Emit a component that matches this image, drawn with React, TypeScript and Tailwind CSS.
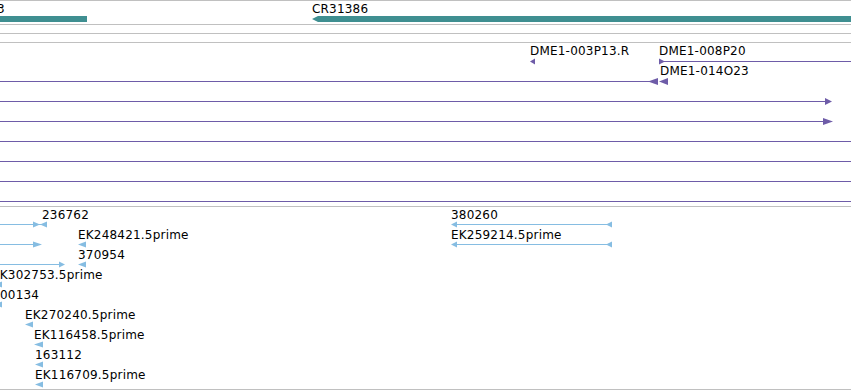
import React from 'react';

type Shape =
  | { kind: 'line'; x1: number; x2: number; y: number }
  | { kind: 'left'; x: number; y: number; w: number; h: number }
  | { kind: 'right'; x: number; y: number; w: number; h: number }
  | { kind: 'bar'; x1: number; x2: number; y: number; h: number; point?: boolean };

interface Label {
  text: string;
  x: number;
  y: number;
}

interface Track {
  top: number;
  height: number;
  color: string;
  shapes: Shape[];
  labels: Label[];
}

const TEAL = '#3f8f91';
const PURPLE = '#6e5ca8';
const BLUE = '#86bde2';

const tracks: Track[] = [
  {
    top: 0,
    height: 24,
    color: TEAL,
    labels: [
      { text: '3', x: -3, y: 2 },
      { text: 'CR31386', x: 312, y: 2 },
    ],
    shapes: [
      { kind: 'bar', x1: 0, x2: 87, y: 16, h: 6 },
      { kind: 'bar', x1: 312, x2: 851, y: 16, h: 6, point: true },
    ],
  },
  { top: 24, height: 9, color: TEAL, labels: [], shapes: [] },
  { top: 33, height: 9, color: TEAL, labels: [], shapes: [] },
  {
    top: 42,
    height: 164,
    color: PURPLE,
    labels: [
      { text: 'DME1-003P13.R', x: 530, y: 44 },
      { text: 'DME1-008P20', x: 659, y: 44 },
      { text: 'DME1-014O23', x: 660, y: 64 },
    ],
    shapes: [
      { kind: 'left', x: 530, y: 61, w: 5, h: 3 },
      { kind: 'line', x1: 660, x2: 851, y: 61 },
      { kind: 'right', x: 659, y: 61, w: 6, h: 3 },
      { kind: 'line', x1: 0, x2: 650, y: 81 },
      { kind: 'left', x: 648, y: 81, w: 10, h: 3.5 },
      { kind: 'left', x: 659, y: 81, w: 9, h: 3.5 },
      { kind: 'line', x1: 0, x2: 826, y: 101 },
      { kind: 'right', x: 825, y: 101, w: 7, h: 3.5 },
      { kind: 'line', x1: 0, x2: 824, y: 121 },
      { kind: 'right', x: 823, y: 121, w: 10, h: 3.5 },
      { kind: 'line', x1: 0, x2: 851, y: 141 },
      { kind: 'line', x1: 0, x2: 851, y: 161 },
      { kind: 'line', x1: 0, x2: 851, y: 181 },
      { kind: 'line', x1: 0, x2: 851, y: 201 },
    ],
  },
  {
    top: 206,
    height: 183,
    color: BLUE,
    labels: [
      { text: '236762', x: 42, y: 208 },
      { text: 'EK248421.5prime', x: 78, y: 228 },
      { text: '370954', x: 78, y: 248 },
      { text: 'EK302753.5prime', x: -8, y: 268 },
      { text: '00134', x: 0, y: 288 },
      { text: 'EK270240.5prime', x: 25, y: 308 },
      { text: 'EK116458.5prime', x: 34, y: 328 },
      { text: '163112', x: 35, y: 348 },
      { text: 'EK116709.5prime', x: 35, y: 368 },
      { text: '380260', x: 451, y: 208 },
      { text: 'EK259214.5prime', x: 451, y: 228 },
    ],
    shapes: [
      { kind: 'line', x1: 0, x2: 46, y: 224 },
      { kind: 'right', x: 33, y: 224, w: 7, h: 3 },
      { kind: 'left', x: 40, y: 224, w: 7, h: 3 },
      { kind: 'line', x1: 0, x2: 35, y: 244 },
      { kind: 'right', x: 33, y: 244, w: 9, h: 3 },
      { kind: 'left', x: 78, y: 244, w: 8, h: 3 },
      { kind: 'line', x1: 0, x2: 60, y: 264 },
      { kind: 'right', x: 59, y: 264, w: 6, h: 3 },
      { kind: 'left', x: 78, y: 264, w: 8, h: 3 },
      { kind: 'left', x: -6, y: 284, w: 8, h: 3 },
      { kind: 'left', x: -6, y: 304, w: 8, h: 3 },
      { kind: 'left', x: 25, y: 324, w: 8, h: 3 },
      { kind: 'left', x: 34, y: 344, w: 9, h: 3 },
      { kind: 'left', x: 35, y: 364, w: 8, h: 3 },
      { kind: 'left', x: 35, y: 384, w: 8, h: 3 },
      { kind: 'line', x1: 452, x2: 611, y: 224 },
      { kind: 'left', x: 451, y: 224, w: 6, h: 3 },
      { kind: 'left', x: 606, y: 224, w: 6, h: 3 },
      { kind: 'line', x1: 452, x2: 611, y: 244 },
      { kind: 'left', x: 451, y: 244, w: 6, h: 3 },
      { kind: 'left', x: 606, y: 244, w: 6, h: 3 },
    ],
  },
];

function ShapeEl({ s, color, top }: { s: Shape; color: string; top: number }) {
  if (s.kind === 'line') {
    const y = s.y - top + 0.5;
    return <line x1={s.x1} x2={s.x2} y1={y} y2={y} stroke={color} strokeWidth={1.2} />;
  }
  if (s.kind === 'bar') {
    const y = s.y - top;
    const mid = y + s.h / 2;
    const pts = s.point
      ? `${s.x1},${mid} ${s.x1 + 6},${y} ${s.x2},${y} ${s.x2},${y + s.h} ${s.x1 + 6},${y + s.h}`
      : `${s.x1},${y} ${s.x2},${y} ${s.x2},${y + s.h} ${s.x1},${y + s.h}`;
    return <polygon points={pts} fill={color} />;
  }
  const y = s.y - top + 0.5;
  const pts =
    s.kind === 'left'
      ? `${s.x},${y} ${s.x + s.w},${y - s.h} ${s.x + s.w},${y + s.h}`
      : `${s.x + s.w},${y} ${s.x},${y - s.h} ${s.x},${y + s.h}`;
  return <polygon points={pts} fill={color} />;
}

export default function App() {
  return (
    <div className="w-[851px] h-[390px] bg-white overflow-hidden font-['DejaVu_Sans',sans-serif] text-[12px] leading-[14px] tracking-[0.2px] text-black">
      {tracks.map((t, i) => (
        <div
          key={i}
          className="relative border-t border-[#c0c0c0] overflow-hidden"
          style={{ height: t.height }}
        >
          <svg className="absolute left-0 top-[-1px]" width={851} height={t.height}>
            {t.shapes.map((s, j) => (
              <ShapeEl key={j} s={s} color={t.color} top={t.top} />
            ))}
          </svg>
          {t.labels.map((l, j) => (
            <span
              key={j}
              className="absolute whitespace-nowrap"
              style={{ left: l.x, top: l.y - t.top - 1 }}
            >
              {l.text}
            </span>
          ))}
        </div>
      ))}
      <div className="h-px border-t border-[#c0c0c0]" />
    </div>
  );
}
